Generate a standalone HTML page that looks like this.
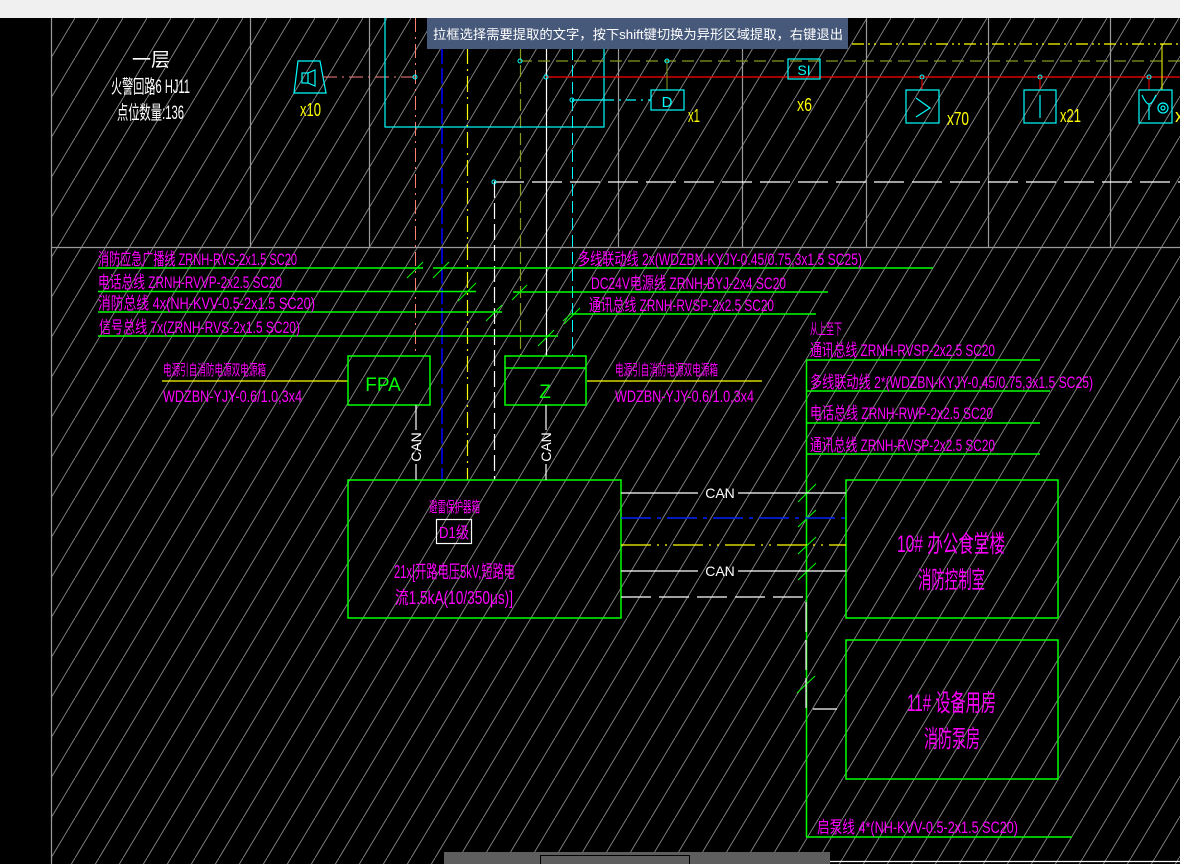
<!DOCTYPE html>
<html><head><meta charset="utf-8"><style>
html,body{margin:0;padding:0;background:#000;width:1180px;height:864px;overflow:hidden}
svg{display:block}
text{font-family:"Liberation Sans","Noto Sans CJK SC",sans-serif}
.m{fill:#ff00ff;font-size:17px}
.w{fill:#fff}
.y{fill:#ffff00;font-size:18px}
.c{fill:#00ffff}
</style></head><body>
<svg width="1180" height="864" viewBox="0 0 1180 864" xmlns="http://www.w3.org/2000/svg">
<defs>
<pattern id="h" width="24" height="40" patternUnits="userSpaceOnUse" x="51" y="18">
<line x1="0" y1="40" x2="24" y2="0" stroke="#8a8a8a" stroke-width="0.9"/>
</pattern>
</defs>
<rect width="1180" height="864" fill="#000"/>
<rect x="51" y="18" width="1129" height="846" fill="url(#h)"/>
<!-- frame/grid -->
<g stroke="#9a9a9a" stroke-width="1.2" fill="none">
<line x1="51.5" y1="18" x2="51.5" y2="864"/>
<line x1="51" y1="247.5" x2="1180" y2="247.5"/>
<line x1="250.5" y1="18" x2="250.5" y2="247"/>
<line x1="369.5" y1="18" x2="369.5" y2="247"/>
<line x1="618.5" y1="18" x2="618.5" y2="247"/>
<line x1="742.5" y1="18" x2="742.5" y2="247"/>
<line x1="866.5" y1="18" x2="866.5" y2="247"/>
<line x1="988.5" y1="18" x2="988.5" y2="247"/>
<line x1="1110.5" y1="18" x2="1110.5" y2="247"/>
</g>
<line x1="830" y1="861.5" x2="1180" y2="861.5" stroke="#fff" stroke-width="1.2"/>
<!-- top texts -->
<text x="151" y="66" class="w" font-size="19" text-anchor="middle">一层</text>
<text x="111" y="93" class="w" font-size="19" textLength="79" lengthAdjust="spacingAndGlyphs">火警回路6 HJ11</text>
<text x="117" y="119" class="w" font-size="19" textLength="67" lengthAdjust="spacingAndGlyphs">点位数量:136</text>
<!-- speaker -->
<g stroke="#00ffff" stroke-width="1.2" fill="none">
<polygon points="298,61 320,61 326,93 294,93"/>
<rect x="302" y="73" width="6" height="10"/>
<polyline points="308,73 315,70 315,86 308,83"/>
</g>
<text x="300" y="116" class="y" textLength="21" lengthAdjust="spacingAndGlyphs">x10</text>
<line x1="323" y1="77" x2="415" y2="77" stroke="#ff8080" stroke-dasharray="14,5,2,5"/>
<!-- verticals -->
<line x1="415.5" y1="18" x2="415.5" y2="356" stroke="#ff8070" stroke-dasharray="14,5,2,5"/>
<line x1="442" y1="48" x2="442" y2="480" stroke="#0000ff" stroke-width="1.5" stroke-dasharray="16,4"/>
<line x1="467.5" y1="48" x2="467.5" y2="480" stroke="#ffff00" stroke-width="1.2" stroke-dasharray="16,5,2,5"/>
<line x1="494.5" y1="182" x2="494.5" y2="480" stroke="#fff" stroke-width="1.2" stroke-dasharray="16,5"/>
<line x1="520.5" y1="48" x2="520.5" y2="356" stroke="#8a9a20" stroke-width="1.2" stroke-dasharray="12,5"/>
<line x1="546.5" y1="48" x2="546.5" y2="356" stroke="#fff" stroke-width="1.2"/>
<line x1="572.5" y1="48" x2="572.5" y2="356" stroke="#00ffff" stroke-dasharray="12,5"/>
<rect x="385" y="10" width="219" height="117" fill="none" stroke="#00ffff" stroke-width="1.2"/>
<!-- horizontal top lines -->
<line x1="852" y1="44" x2="1180" y2="44" stroke="#ffff00" stroke-width="1.2" stroke-dasharray="12,4,2,4,2,4"/>
<line x1="520" y1="61" x2="1180" y2="61" stroke="#8a9a20" stroke-width="1.2" stroke-dasharray="12,6"/>
<line x1="546" y1="77" x2="1180" y2="77" stroke="#ff0000" stroke-width="1.2"/>
<line x1="572" y1="100" x2="604" y2="100" stroke="#00ffff" stroke-width="1.2"/>
<line x1="604" y1="100" x2="651" y2="100" stroke="#00ffff" stroke-width="1.2" stroke-dasharray="10,5,2,5"/>
<line x1="494" y1="182" x2="1180" y2="182" stroke="#fff" stroke-width="1.2" stroke-dasharray="30,8"/>
<g fill="none" stroke="#00ffff" stroke-width="1">
<circle cx="415" cy="77" r="2"/><circle cx="520" cy="61" r="2"/><circle cx="546" cy="77" r="2"/><circle cx="572" cy="100" r="2"/><circle cx="494" cy="182" r="2"/>
<circle cx="667" cy="61" r="2"/><circle cx="922" cy="77" r="2"/><circle cx="1040" cy="77" r="2"/><circle cx="1149" cy="77" r="2"/>
</g>
<line x1="667" y1="63" x2="667" y2="90" stroke="#8a9a20"/>
<g stroke="#ff0000"><line x1="922" y1="79" x2="922" y2="90"/><line x1="1040" y1="79" x2="1040" y2="90"/><line x1="1149" y1="79" x2="1149" y2="90"/></g>
<line x1="1162" y1="44" x2="1162" y2="90" stroke="#ffff00"/>
<g fill="none" stroke="#00ffff" stroke-width="1.2">
<rect x="651" y="90" width="33" height="20"/>
<rect x="788" y="59" width="32" height="20"/>
<rect x="906" y="90" width="33" height="33"/>
<polyline points="916,98 930,108 916,117"/>
<rect x="1024" y="90" width="32" height="33"/>
<line x1="1040" y1="95" x2="1040" y2="118"/>
<rect x="1139" y="90" width="33" height="33"/>
<path d="M1142,95 Q1146,104 1149,104 Q1152,104 1156,95 M1149,104 L1149,120"/>
<circle cx="1163" cy="108" r="5"/><circle cx="1163" cy="108" r="2"/>
</g>
<text x="667" y="107" class="c" font-size="15" text-anchor="middle">D</text>
<text x="804" y="75" class="c" font-size="14" text-anchor="middle">SI</text>
<text x="688" y="122" class="y" textLength="12" lengthAdjust="spacingAndGlyphs">x1</text>
<text x="797" y="111" class="y" textLength="15" lengthAdjust="spacingAndGlyphs">x6</text>
<text x="947" y="125" class="y" textLength="22" lengthAdjust="spacingAndGlyphs">x70</text>
<text x="1060" y="122" class="y" textLength="21" lengthAdjust="spacingAndGlyphs">x21</text>
<text x="1175" y="122" class="y">x</text>
<!-- top bar & tooltip -->
<rect x="0" y="0" width="1180" height="18" fill="#f0f0f0"/>
<rect x="427" y="18" width="421" height="31" fill="#46597a"/>
<text x="433" y="39" fill="#fff" font-size="13" textLength="410" lengthAdjust="spacingAndGlyphs">拉框选择需要提取的文字，按下shift键切换为异形区域提取，右键退出</text>
<!-- middle green bus lines -->
<g stroke="#00ff00" stroke-width="1.5">
<line x1="98" y1="268" x2="423" y2="268"/><line x1="433" y1="268" x2="933" y2="268"/>
<line x1="98" y1="291.5" x2="476" y2="291.5"/><line x1="513" y1="292" x2="828" y2="292"/>
<line x1="98" y1="312" x2="502" y2="312"/><line x1="572" y1="314" x2="816" y2="314"/>
<line x1="98" y1="336" x2="558" y2="336"/>
<line x1="806" y1="360" x2="1040" y2="360"/><line x1="806" y1="391" x2="1050" y2="391"/>
<line x1="806" y1="423" x2="1040" y2="423"/><line x1="806" y1="454" x2="1040" y2="454"/>
<line x1="806.5" y1="360" x2="806.5" y2="837"/>
<line x1="806" y1="837" x2="1072" y2="837"/>
</g>
<g stroke="#00ff00" stroke-width="1">
<line x1="407" y1="278" x2="423" y2="262"/><line x1="433" y1="278" x2="449" y2="262"/>
<line x1="458" y1="301" x2="476" y2="283"/><line x1="512" y1="300" x2="527" y2="285"/>
<line x1="486" y1="321" x2="502" y2="305"/><line x1="564" y1="324" x2="580" y2="308"/>
<line x1="538" y1="346" x2="554" y2="330"/><line x1="563" y1="321" x2="572" y2="313"/>
<line x1="798" y1="502" x2="816" y2="484"/><line x1="798" y1="527" x2="816" y2="510"/>
<line x1="798" y1="554" x2="816" y2="537"/><line x1="798" y1="580" x2="816" y2="563"/>
<line x1="797" y1="693" x2="815" y2="676"/>
</g>
<!-- magenta labels -->
<g class="m">
<text x="98" y="265" textLength="199" lengthAdjust="spacingAndGlyphs">消防应急广播线 ZRNH-RVS-2x1.5 SC20</text>
<text x="98" y="288" textLength="184" lengthAdjust="spacingAndGlyphs">电话总线 ZRNH-RVVP-2x2.5 SC20</text>
<text x="98" y="309" textLength="217" lengthAdjust="spacingAndGlyphs">消防总线 4x(NH-KVV-0.5-2x1.5 SC20)</text>
<text x="99" y="333" textLength="201" lengthAdjust="spacingAndGlyphs">信号总线 7x(ZRNH-RVS-2x1.5 SC20)</text>
<text x="578" y="265" textLength="284" lengthAdjust="spacingAndGlyphs">多线联动线 2x(WDZBN-KYJY-0.45/0.75,3x1.5 SC25)</text>
<text x="591" y="289" textLength="195" lengthAdjust="spacingAndGlyphs">DC24V电源线 ZRNH-BYJ-2x4 SC20</text>
<text x="589" y="311" textLength="185" lengthAdjust="spacingAndGlyphs">通讯总线 ZRNH-RVSP-2x2.5 SC20</text>
<text x="163" y="375" font-size="15" textLength="103" lengthAdjust="spacingAndGlyphs">电源引自消防电源双电源箱</text>
<text x="163" y="402" textLength="139" lengthAdjust="spacingAndGlyphs">WDZBN-YJY-0.6/1.0,3x4</text>
<text x="615" y="375" font-size="15" textLength="103" lengthAdjust="spacingAndGlyphs">电源引自消防电源双电源箱</text>
<text x="615" y="402" textLength="139" lengthAdjust="spacingAndGlyphs">WDZBN-YJY-0.6/1.0,3x4</text>
<text x="810" y="334" font-size="15" textLength="32" lengthAdjust="spacingAndGlyphs">从上至下</text>
<text x="810" y="356" textLength="185" lengthAdjust="spacingAndGlyphs">通讯总线 ZRNH-RVSP-2x2.5 SC20</text>
<text x="810" y="388" textLength="283" lengthAdjust="spacingAndGlyphs">多线联动线 2*(WDZBN-KYJY-0.45/0.75,3x1.5 SC25)</text>
<text x="810" y="419" textLength="183" lengthAdjust="spacingAndGlyphs">电话总线 ZRNH-RWP-2x2.5 SC20</text>
<text x="810" y="451" textLength="185" lengthAdjust="spacingAndGlyphs">通讯总线 ZRNH-RVSP-2x2.5 SC20</text>
<text x="817" y="833" textLength="201" lengthAdjust="spacingAndGlyphs">启泵线 4*(NH-KVV-0.5-2x1.5 SC20)</text>
<text x="429" y="512" font-size="15" textLength="51" lengthAdjust="spacingAndGlyphs">避雷保护器箱</text>
<text x="439" y="538" font-size="16" textLength="30" lengthAdjust="spacingAndGlyphs">D1级</text>
<text x="394" y="578" font-size="18" textLength="121" lengthAdjust="spacingAndGlyphs">21x[开路电压5kV,短路电</text>
<text x="395" y="604" font-size="18" textLength="118" lengthAdjust="spacingAndGlyphs">流1.5kA(10/350μs)]</text>
<text x="897" y="552" font-size="24" textLength="108" lengthAdjust="spacingAndGlyphs">10# 办公食堂楼</text>
<text x="918" y="588" font-size="24" textLength="67" lengthAdjust="spacingAndGlyphs">消防控制室</text>
<text x="907" y="711" font-size="24" textLength="89" lengthAdjust="spacingAndGlyphs">11# 设备用房</text>
<text x="924" y="747" font-size="24" textLength="56" lengthAdjust="spacingAndGlyphs">消防泵房</text>
</g>
<!-- yellow power lines -->
<line x1="162" y1="381" x2="348" y2="381" stroke="#ffff00" stroke-width="1.2"/>
<line x1="587" y1="381" x2="762" y2="381" stroke="#ffff00" stroke-width="1.2"/>
<!-- boxes -->
<g fill="none" stroke="#00ff00" stroke-width="1.5">
<rect x="348" y="356" width="82" height="49"/>
<rect x="505" y="356" width="81" height="49"/><line x1="505" y1="368" x2="586" y2="368"/>
<rect x="348" y="480" width="273" height="138"/>
<rect x="846" y="480" width="212" height="138"/>
<rect x="846" y="640" width="212" height="139"/>
</g>
<rect x="436.5" y="519.5" width="35" height="24" fill="none" stroke="#fff" stroke-width="1.2"/>
<text x="383" y="391" fill="#00ff00" font-size="19" text-anchor="middle">FPA</text>
<text x="545" y="398" fill="#00ff00" font-size="19" text-anchor="middle">Z</text>
<!-- CAN verticals -->
<g stroke="#fff" stroke-width="1.2">
<line x1="416" y1="405" x2="416" y2="430"/><line x1="416" y1="464" x2="416" y2="480"/>
<line x1="546" y1="405" x2="546" y2="430"/><line x1="546" y1="464" x2="546" y2="480"/>
<line x1="621" y1="493" x2="698" y2="493"/><line x1="738" y1="493" x2="846" y2="493"/>
<line x1="621" y1="571" x2="698" y2="571"/><line x1="738" y1="571" x2="846" y2="571"/>
</g>
<text transform="translate(421,447) rotate(-90)" class="w" font-size="14" text-anchor="middle">CAN</text>
<text transform="translate(551,447) rotate(-90)" class="w" font-size="14" text-anchor="middle">CAN</text>
<text x="720" y="498" class="w" font-size="14" text-anchor="middle">CAN</text>
<text x="720" y="576" class="w" font-size="14" text-anchor="middle">CAN</text>
<line x1="621" y1="518" x2="846" y2="518" stroke="#0022ff" stroke-width="1.5" stroke-dasharray="30,6,4,6"/>
<line x1="621" y1="545" x2="846" y2="545" stroke="#ffff00" stroke-width="1.2" stroke-dasharray="30,6,2,6,2,6"/>
<polyline points="621,597 806,597 806,709 837,709" fill="none" stroke="#fff" stroke-width="1.2" stroke-dasharray="30,8"/>
<!-- bottom toolbar -->
<rect x="444" y="852" width="386" height="12" fill="#5e5e5e"/>
<rect x="540.5" y="855.5" width="149" height="9" fill="#5e5e5e" stroke="#000"/>
</svg>
</body></html>
